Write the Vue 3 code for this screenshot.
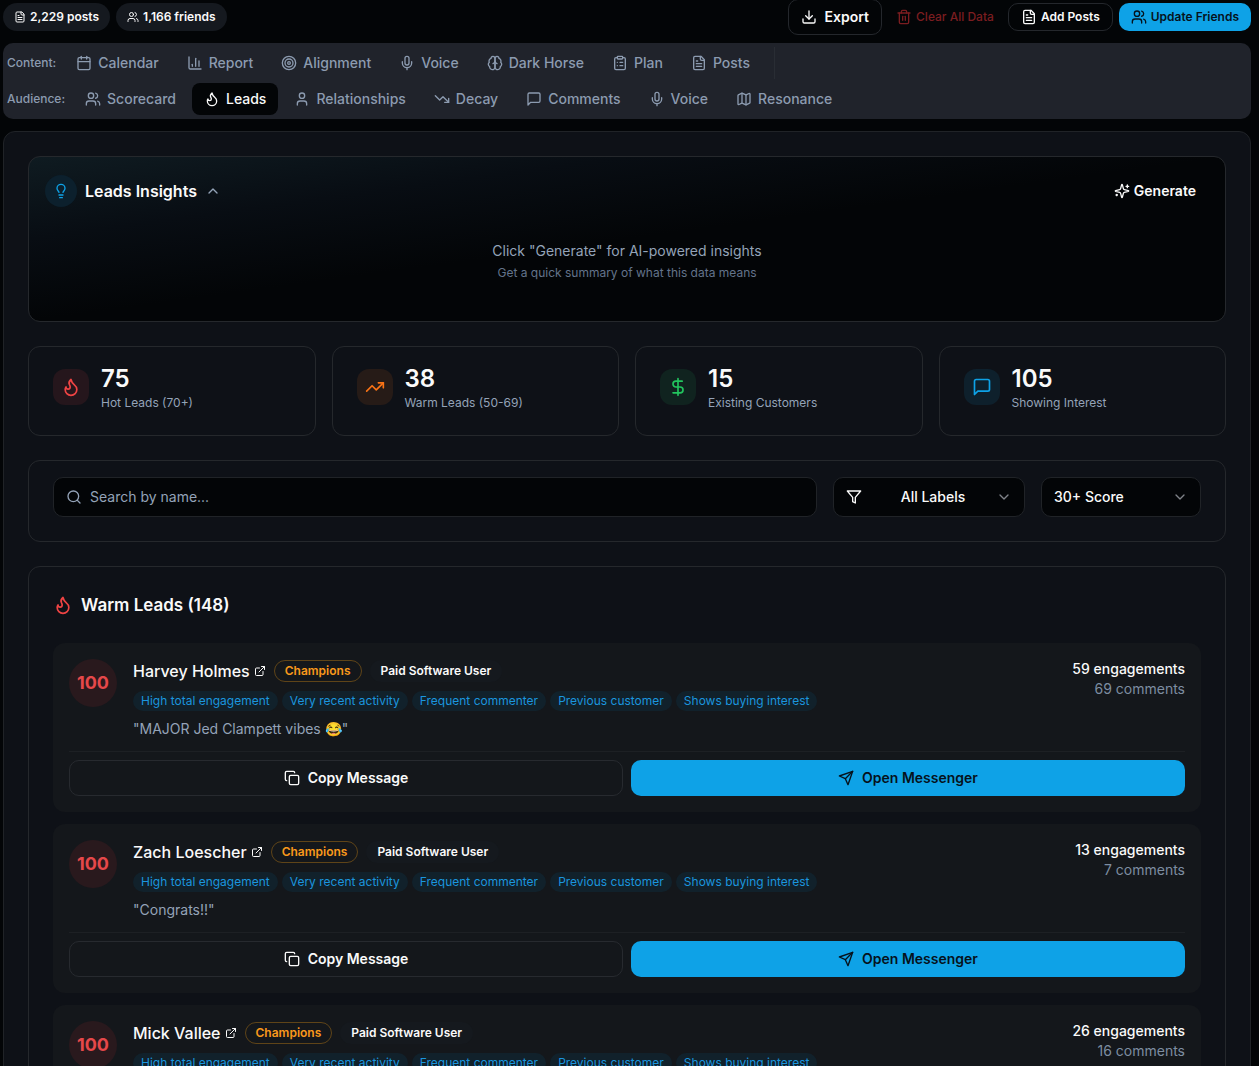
<script setup>
import { h, ref } from 'vue'

const paths = {
  file: '<path d="M15 2H6a2 2 0 0 0-2 2v16a2 2 0 0 0 2 2h12a2 2 0 0 0 2-2V7Z"/><path d="M14 2v4a2 2 0 0 0 2 2h4"/><path d="M10 9H8"/><path d="M16 13H8"/><path d="M16 17H8"/>',
  users: '<path d="M16 21v-2a4 4 0 0 0-4-4H6a4 4 0 0 0-4 4v2"/><circle cx="9" cy="7" r="4"/><path d="M22 21v-2a4 4 0 0 0-3-3.87"/><path d="M16 3.13a4 4 0 0 1 0 7.75"/>',
  download: '<path d="M21 15v4a2 2 0 0 1-2 2H5a2 2 0 0 1-2-2v-4"/><path d="m7 10 5 5 5-5"/><path d="M12 15V3"/>',
  trash: '<path d="M3 6h18"/><path d="M19 6v14a2 2 0 0 1-2 2H7a2 2 0 0 1-2-2V6"/><path d="M8 6V4a2 2 0 0 1 2-2h4a2 2 0 0 1 2 2v2"/><path d="M10 11v6"/><path d="M14 11v6"/>',
  calendar: '<path d="M8 2v4"/><path d="M16 2v4"/><rect width="18" height="18" x="3" y="4" rx="2"/><path d="M3 10h18"/>',
  chart: '<path d="M3 3v16a2 2 0 0 0 2 2h16"/><path d="M18 17V9"/><path d="M13 17V5"/><path d="M8 17v-3"/>',
  target: '<circle cx="12" cy="12" r="10"/><circle cx="12" cy="12" r="6"/><circle cx="12" cy="12" r="2"/>',
  mic: '<path d="M12 2a3 3 0 0 0-3 3v7a3 3 0 0 0 6 0V5a3 3 0 0 0-3-3Z"/><path d="M19 10v2a7 7 0 0 1-14 0v-2"/><path d="M12 19v3"/>',
  brain: '<path d="M12 5a3 3 0 1 0-5.997.125 4 4 0 0 0-2.526 5.77 4 4 0 0 0 .556 6.588A4 4 0 1 0 12 18Z"/><path d="M12 5a3 3 0 1 1 5.997.125 4 4 0 0 1 2.526 5.77 4 4 0 0 1-.556 6.588A4 4 0 1 1 12 18Z"/><path d="M15 13a4.5 4.5 0 0 1-3-4 4.5 4.5 0 0 1-3 4"/>',
  clipboard: '<rect width="8" height="4" x="8" y="2" rx="1"/><path d="M16 4h2a2 2 0 0 1 2 2v14a2 2 0 0 1-2 2H6a2 2 0 0 1-2-2V6a2 2 0 0 1 2-2h2"/><path d="M12 11h4"/><path d="M12 16h4"/><path d="M8 11h.01"/><path d="M8 16h.01"/>',
  flame: '<path d="M8.5 14.5A2.5 2.5 0 0 0 11 12c0-1.38-.5-2-1-3-1.072-2.143-.224-4.054 2-6 .5 2.5 2 4.9 4 6.5 2 1.6 3 3.5 3 5.5a7 7 0 1 1-14 0c0-1.153.433-2.294 1-3a2.5 2.5 0 0 0 2.5 2.5z"/>',
  user: '<path d="M19 21v-2a4 4 0 0 0-4-4H9a4 4 0 0 0-4 4v2"/><circle cx="12" cy="7" r="4"/>',
  down: '<path d="m22 17-8.500-8.500-5 5L2 7"/><path d="M16 17h6v-6"/>',
  up: '<path d="m22 7-8.500 8.500-5-5L2 17"/><path d="M16 7h6v6"/>',
  message: '<path d="M21 15a2 2 0 0 1-2 2H7l-4 4V5a2 2 0 0 1 2-2h14a2 2 0 0 1 2 2z"/>',
  map: '<path d="M14.106 5.553a2 2 0 0 0 1.788 0l3.659-1.830A1 1 0 0 1 21 4.619v12.764a1 1 0 0 1-.553.894l-4.553 2.277a2 2 0 0 1-1.788 0l-4.212-2.106a2 2 0 0 0-1.788 0l-3.659 1.830A1 1 0 0 1 3 19.381V6.618a1 1 0 0 1 .553-.894l4.553-2.277a2 2 0 0 1 1.788 0z"/><path d="M15 5.764v15"/><path d="M9 3.236v15"/>',
  bulb: '<path d="M15 14c.2-1 .7-1.700 1.500-2.500 1-.9 1.500-2.200 1.500-3.500A6 6 0 0 0 6 8c0 1 .2 2.200 1.500 3.500.7.7 1.300 1.500 1.500 2.500"/><path d="M9 18h6"/><path d="M10 22h4"/>',
  chevronUp: '<path d="m18 15-6-6-6 6"/>',
  chevronDown: '<path d="m6 9 6 6 6-6"/>',
  sparkles: '<path d="M9.937 15.500A2 2 0 0 0 8.500 14.063l-6.135-1.582a.5.5 0 0 1 0-.962L8.500 9.936A2 2 0 0 0 9.937 8.500l1.582-6.135a.5.5 0 0 1 .963 0L14.063 8.500A2 2 0 0 0 15.500 9.937l6.135 1.581a.5.5 0 0 1 0 .964L15.500 14.063a2 2 0 0 0-1.437 1.437l-1.582 6.135a.5.5 0 0 1-.963 0z"/><path d="M20 3v4"/><path d="M22 5h-4"/><path d="M4 17v2"/><path d="M5 18H3"/>',
  dollar: '<path d="M12 2v20"/><path d="M17 5H9.500a3.500 3.500 0 0 0 0 7h5a3.500 3.500 0 0 1 0 7H6"/>',
  search: '<circle cx="11" cy="11" r="8"/><path d="m21 21-4.300-4.300"/>',
  filter: '<path d="M22 3H2l8 9.460V19l4 2v-8.540z"/>',
  external: '<path d="M15 3h6v6"/><path d="M10 14 21 3"/><path d="M18 13v6a2 2 0 0 1-2 2H5a2 2 0 0 1-2-2V8a2 2 0 0 1 2-2h6"/>',
  copy: '<rect width="14" height="14" x="8" y="8" rx="2"/><path d="M4 16c-1.100 0-2-.9-2-2V4c0-1.100.9-2 2-2h10c1.100 0 2 .9 2 2"/>',
  send: '<path d="m22 2-7 20-4-9-9-4Z"/><path d="M22 2 11 13"/>'
}

const Icon = (props) =>
  h('svg', {
    width: props.size || 16,
    height: props.size || 16,
    viewBox: '0 0 24 24',
    fill: 'none',
    stroke: 'currentColor',
    'stroke-width': 2,
    'stroke-linecap': 'round',
    'stroke-linejoin': 'round',
    'aria-hidden': 'true',
    innerHTML: paths[props.name]
  })
Icon.props = ['name', 'size']

const contentTabs = [
  ['calendar', 'Calendar'], ['chart', 'Report'], ['target', 'Alignment'], ['mic', 'Voice'],
  ['brain', 'Dark Horse'], ['clipboard', 'Plan'], ['file', 'Posts']
]
const audienceTabs = [
  ['users', 'Scorecard'], ['flame', 'Leads'], ['user', 'Relationships'], ['down', 'Decay'],
  ['message', 'Comments'], ['mic', 'Voice'], ['map', 'Resonance']
]
const activeTab = ref('Leads')

const stats = [
  { icon: 'flame', tone: 'red', value: 75, label: 'Hot Leads (70+)' },
  { icon: 'up', tone: 'orange', value: 38, label: 'Warm Leads (50-69)' },
  { icon: 'dollar', tone: 'green', value: 15, label: 'Existing Customers' },
  { icon: 'message', tone: 'blue', value: 105, label: 'Showing Interest' }
]

const signals = ['High total engagement', 'Very recent activity', 'Frequent commenter', 'Previous customer', 'Shows buying interest']
const leads = [
  { name: 'Harvey Holmes', engagements: 59, comments: 69, quote: '"MAJOR Jed Clampett vibes 😂"' },
  { name: 'Zach Loescher', engagements: 13, comments: 7, quote: '"Congrats!!"' },
  { name: 'Mick Vallee', engagements: 26, comments: 16, quote: '' }
]
const query = ref('')
</script>

<template>
  <div class="page">
    <header class="topbar">
      <span class="count"><Icon name="file" :size="12" />2,229 posts</span>
      <span class="count"><Icon name="users" :size="12" />1,166 friends</span>
      <div class="actions">
        <button class="btn export"><Icon name="download" />Export</button>
        <button class="btn small clear"><Icon name="trash" />Clear All Data</button>
        <button class="btn small add"><Icon name="file" />Add Posts</button>
        <button class="btn small primary"><Icon name="users" />Update Friends</button>
      </div>
    </header>

    <nav class="tabs">
      <div class="tab-row">
        <span class="tab-label">Content:</span>
        <button v-for="[icon, label] in contentTabs" :key="label" class="tab"><Icon :name="icon" />{{ label }}</button>
        <span class="divider"></span>
      </div>
      <div class="tab-row">
        <span class="tab-label">Audience:</span>
        <button v-for="[icon, label] in audienceTabs" :key="label" class="tab" :class="{ active: label === activeTab }" @click="activeTab = label">
          <Icon :name="icon" />{{ label }}
        </button>
      </div>
    </nav>

    <main class="panel">
      <section class="card insights">
        <div class="insights-head">
          <span class="bulb"><Icon name="bulb" /></span>
          <h2>Leads Insights</h2>
          <Icon class="muted" name="chevronUp" />
          <button class="btn generate"><Icon name="sparkles" />Generate</button>
        </div>
        <div class="insights-body">
          <p>Click "Generate" for AI-powered insights</p>
          <p class="hint">Get a quick summary of what this data means</p>
        </div>
      </section>

      <section class="stats">
        <div v-for="s in stats" :key="s.label" class="card stat">
          <span class="tile" :class="s.tone"><Icon :name="s.icon" :size="20" /></span>
          <div>
            <div class="value">{{ s.value }}</div>
            <div class="label">{{ s.label }}</div>
          </div>
        </div>
      </section>

      <section class="card filters">
        <label class="field search">
          <Icon name="search" />
          <input v-model="query" type="text" placeholder="Search by name..." aria-label="Search by name" />
        </label>
        <label class="field labels">
          <Icon name="filter" />
          <select aria-label="Label"><option>All Labels</option></select>
          <Icon class="chevron" name="chevronDown" />
        </label>
        <label class="field score">
          <select aria-label="Score"><option>30+ Score</option></select>
          <Icon class="chevron" name="chevronDown" />
        </label>
      </section>

      <section class="card list">
        <h3><Icon name="flame" :size="20" />Warm Leads (148)</h3>
        <article v-for="lead in leads" :key="lead.name" class="lead">
          <div class="lead-main">
            <div class="score-badge">100</div>
            <div class="info">
              <div class="name-row">
                <a href="#">{{ lead.name }}<Icon name="external" :size="12" /></a>
                <span class="pill champion">Champions</span>
                <span class="pill paid">Paid Software User</span>
              </div>
              <div class="signals"><span v-for="s in signals" :key="s">{{ s }}</span></div>
              <p class="quote">{{ lead.quote }}</p>
            </div>
            <div class="totals">
              <strong>{{ lead.engagements }} engagements</strong>
              <span>{{ lead.comments }} comments</span>
            </div>
          </div>
          <div class="lead-actions">
            <button class="btn outline"><Icon name="copy" />Copy Message</button>
            <button class="btn primary"><Icon name="send" />Open Messenger</button>
          </div>
        </article>
      </section>
    </main>
  </div>
</template>

<style>
body {
  margin: 0;
  background: #030507;
}
</style>

<style scoped>
.page {
  padding: 0 8px 0 3px;
  font-family: Inter, "Liberation Sans", sans-serif;
  font-size: 14px;
  line-height: 20px;
  color: #fafafa;
}
.page * { box-sizing: border-box; }
svg { flex: none; }
h2, h3, p { margin: 0; }
button, input, select { font: inherit; color: inherit; }
.muted { color: #94a3b8; }

.btn {
  display: inline-flex;
  align-items: center;
  justify-content: center;
  gap: 8px;
  height: 36px;
  padding: 0 12px;
  border: 1px solid transparent;
  border-radius: 10px;
  background: none;
  font-weight: 600;
  white-space: nowrap;
  cursor: pointer;
}
.btn.small { height: 28px; gap: 4px; font-size: 12px; }
.btn.primary { background: #0ea2e7; border: 0; color: #06121c; }

.topbar { display: flex; align-items: center; gap: 6px; height: 34px; }
.count {
  display: flex;
  align-items: center;
  gap: 4px;
  height: 28px;
  padding: 0 11px;
  border-radius: 14px;
  background: #15191f;
  font-size: 12px;
  font-weight: 600;
}
.actions { display: flex; align-items: center; gap: 6px; margin-left: auto; }
.export, .add { border-color: #24272c; }
.btn.clear { padding: 0 8px; border: 0; color: #7b1d20; font-weight: 500; }

.tabs {
  display: flex;
  flex-direction: column;
  gap: 4px;
  margin-top: 9px;
  padding: 4px;
  border-radius: 10px;
  background: #20232b;
  color: #8c9bb0;
}
.tab-row { display: flex; align-items: center; gap: 4px; height: 32px; }
.tab-label { padding-right: 4px; font-size: 12px; font-weight: 500; }
.tab {
  display: flex;
  align-items: center;
  gap: 6px;
  height: 32px;
  padding: 0 12px;
  border: 0;
  border-radius: 8px;
  background: none;
  font-weight: 500;
  cursor: pointer;
}
.tab.active { background: #030507; color: #fafafa; }
.divider { width: 1px; height: 32px; margin-left: 8px; background: #292d34; }

.panel {
  display: flex;
  flex-direction: column;
  gap: 24px;
  margin-top: 12px;
  padding: 24px;
  border: 1px solid #202327;
  border-radius: 12px;
  background: #0e1117;
}
.card { border: 1px solid #25282c; border-radius: 12px; }

.insights {
  padding: 16px;
  background: linear-gradient(to bottom right, #0f1b21, #080d13 25%, #030507 50%);
}
.insights-head { display: flex; align-items: center; gap: 8px; }
.insights-head h2 { font-size: 16px; line-height: 24px; font-weight: 600; }
.bulb {
  display: flex;
  align-items: center;
  justify-content: center;
  width: 32px;
  height: 32px;
  border-radius: 50%;
  background: #0c202d;
  color: #0ea2e7;
}
.generate { gap: 4px; margin-left: auto; }
.insights-body { padding: 32px 0 24px; text-align: center; color: #94a3b8; }
.insights-body .hint { margin-top: 4px; font-size: 12px; line-height: 16px; color: #64748b; }

.stats { display: grid; grid-template-columns: repeat(4, 1fr); gap: 16px; }
.stat { display: flex; align-items: center; gap: 12px; padding: 16px 24px 24px; }
.tile { display: flex; align-items: center; justify-content: center; width: 36px; height: 36px; border-radius: 12px; }
.tile.red { background: #25161c; color: #ef4444; }
.tile.orange { background: #261b17; color: #f97316; }
.tile.green { background: #10231f; color: #22c55e; }
.tile.blue { background: #0e202c; color: #0ea2e7; }
.value { font-size: 24px; line-height: 32px; font-weight: 600; }
.label { font-size: 12px; line-height: 16px; color: #94a3b8; }

.filters { display: flex; gap: 16px; padding: 16px 24px 24px; }
.field {
  display: flex;
  align-items: center;
  gap: 8px;
  height: 40px;
  padding: 0 12px;
  border: 1px solid #202327;
  border-radius: 10px;
  background: #030507;
}
.field input, .field select {
  flex: 1;
  min-width: 0;
  padding: 0;
  border: 0;
  outline: 0;
  background: none;
  appearance: none;
}
.field select { font-weight: 500; }
.field input::placeholder { color: #94a3b8; opacity: 1; }
.search { flex: 1; }
.search svg { color: #94a3b8; }
.labels { width: 192px; }
.labels select { padding-left: 8px; text-align-last: center; }
.score { width: 160px; }
.chevron { color: #7f8389; pointer-events: none; }

.list { display: flex; flex-direction: column; gap: 12px; padding: 24px; }
.list h3 { display: flex; align-items: center; gap: 8px; margin-bottom: 12px; font-size: 17px; line-height: 28px; font-weight: 600; }
.list h3 svg { color: #ef4444; }
.lead { padding: 16px; border-radius: 12px; background: #14171b; }
.lead-main { display: flex; gap: 16px; }
.score-badge {
  flex: none;
  width: 48px;
  height: 48px;
  border-radius: 50%;
  background: #29191d;
  color: #e5484a;
  font-size: 18px;
  line-height: 48px;
  font-weight: 700;
  text-align: center;
}
.info { flex: 1; min-width: 0; }
.name-row { display: flex; align-items: center; gap: 8px; height: 24px; }
.name-row a {
  display: flex;
  align-items: center;
  gap: 4px;
  color: inherit;
  font-size: 16px;
  line-height: 24px;
  font-weight: 500;
  text-decoration: none;
}
.pill { padding: 2px 10px; border: 1px solid transparent; border-radius: 11px; font-size: 12px; line-height: 16px; font-weight: 600; }
.champion { border-color: #5f4418; color: #f9991c; }
.paid { background: #15191e; }
.signals { display: flex; flex-wrap: wrap; gap: 4px; margin-top: 8px; }
.signals span { padding: 2px 8px; border-radius: 10px; background: #11212b; color: #1b95de; font-size: 12px; line-height: 16px; }
.quote { height: 20px; margin-top: 8px; color: #94a3b8; }
.totals { display: flex; flex-direction: column; text-align: right; color: #7d8da1; }
.totals strong { color: #fafafa; font-weight: 500; }
.lead-actions {
  display: grid;
  grid-template-columns: 1fr 1fr;
  gap: 8px;
  margin-top: 12px;
  padding-top: 8px;
  border-top: 1px solid #1d2024;
}
.outline { border-color: #272a2f; }
</style>
